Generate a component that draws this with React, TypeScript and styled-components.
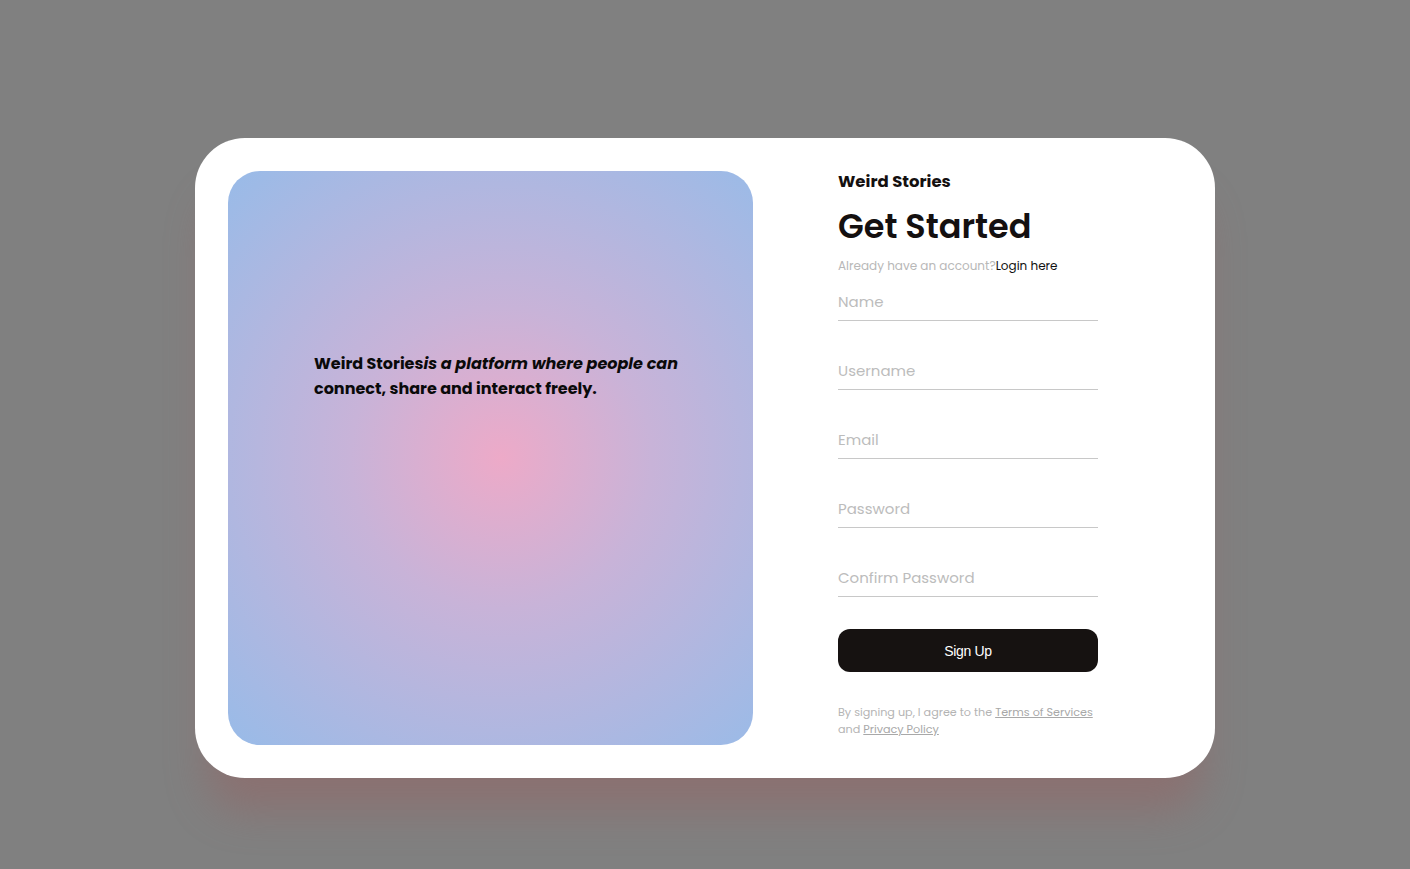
import styled, { createGlobalStyle } from "styled-components";

const GlobalStyle = createGlobalStyle`
  * { box-sizing: border-box; }
  html, body {
    margin: 0;
    padding: 0;
    background: #808080;
    font-family: "Poppins", "Inter", "Noto Sans", sans-serif;
  }
`

const Page = styled.main`
  width: 100%;
  min-height: 869px;
  display: flex;
  align-items: flex-start;
  justify-content: center;
  padding-top: 138px;
`
const Card = styled.section`
  width: 1020px;
  height: 640px;
  background-color: #ffffff;
  border-radius: 50px;
  padding: 33px;
  display: flex;
  box-shadow: 0 45px 40px -12px rgba(150, 95, 95, 0.45);
`
const Visual = styled.div`
  width: 525px;
  height: 574px;
  border-radius: 32px;
  background: radial-gradient(circle at 52% 50%, #edaac8 0%, #c8b3d8 38%, #98bbe8 100%);
  padding: 180px 60px 0 86px;
`
const Pitch = styled.p`
  margin: 0;
  font-size: 16px;
  font-weight: 700;
  line-height: 25px;
  color: #0a0a0a;
  em { font-style: italic; }
`
const FormSide = styled.div`
  flex: 1;
  padding: 0 0 0 85px;
  display: flex;
  flex-direction: column;
`
const Brand = styled.h2`
  margin: 0;
  font-size: 16.5px;
  font-weight: 700;
  color: #141010;
  line-height: 22px;
`
const Title = styled.h1`
  margin: 14px 0 0;
  font-size: 33.5px;
  font-weight: 600;
  color: #141010;
  line-height: 40px;
`
const Hint = styled.p`
  margin: 10px 0 0;
  font-size: 12px;
  color: #b8b8b8;
  a {
    color: #111;
    text-decoration: none;
  }
`
const Form = styled.form`
  width: 260px;
  display: flex;
  flex-direction: column;
  gap: 35px;
  margin-top: 12px;
`
const Field = styled.input`
  width: 100%;
  height: 34px;
  border: none;
  border-bottom: 1.5px solid #c8c8c8;
  outline: none;
  font-family: inherit;
  font-size: 15px;
  padding: 0 0 5px;
  color: #222;
  background: transparent;
  &::placeholder { color: #bcbcbc; }
`
const SubmitButton = styled.button`
  margin-top: -3px;
  height: 43px;
  border: none;
  border-radius: 12px;
  background-color: #161211;
  color: #fff;
  font-family: "Liberation Sans", Arial, sans-serif;
  font-size: 14px;
  letter-spacing: -0.3px;
`
const Terms = styled.p`
  margin: 32px 0 0;
  width: 262px;
  font-size: 11.2px;
  line-height: 17px;
  color: #b4b4b4;
  a { color: #a8a8a8; text-decoration: underline; }
`

export default function App() {
  const fields = ["Name", "Username", "Email", "Password", "Confirm Password"];
  return (
    <>
      <GlobalStyle />
      <Page>
        <Card>
          <Visual>
            <Pitch>
              Weird Stories<em>is a platform where people can</em> connect, share and interact freely.
            </Pitch>
          </Visual>
          <FormSide>
            <Brand>Weird Stories</Brand>
            <Title>Get Started</Title>
            <Hint>Already have an account?<a href="#">Login here</a></Hint>
            <Form onSubmit={(e) => e.preventDefault()}>
              {fields.map((f) => (
                <Field key={f} placeholder={f} type={f.includes("Password") ? "password" : "text"} />
              ))}
              <SubmitButton type="submit">Sign Up</SubmitButton>
            </Form>
            <Terms>
              By signing up, I agree to the <a href="#">Terms of Services</a> and <a href="#">Privacy Policy</a>
            </Terms>
          </FormSide>
        </Card>
      </Page>
    </>
  )
}
